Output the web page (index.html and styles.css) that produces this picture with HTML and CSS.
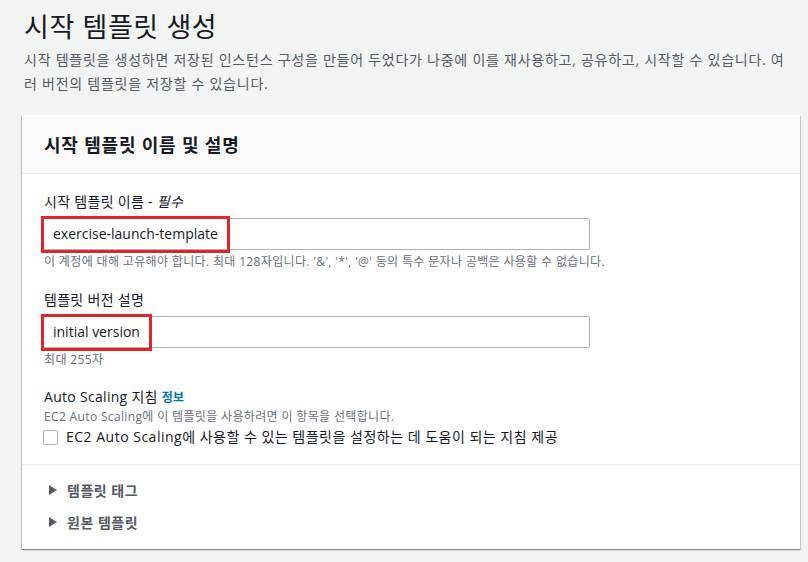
FILE: index.html
```html
<!DOCTYPE html>
<html lang="ko">
<head>
<meta charset="utf-8">
<link rel="stylesheet" href="styles.css">
</head>
<body>
<div class="page">
  <h1 class="title">시작 템플릿 생성</h1>
  <p class="desc">시작 템플릿을 생성하면 저장된 인스턴스 구성을 만들어 두었다가 나중에 이를 재사용하고, 공유하고, 시작할 수 있습니다. 여러 버전의 템플릿을 저장할 수 있습니다.</p>
  <section class="card">
    <header class="card-head">시작 템플릿 이름 및 설명</header>
    <div class="card-body">
      <div class="field">
        <label class="label">시작 템플릿 이름 - <i>필수</i></label>
        <div class="input"><span class="mark">exercise-launch-template</span></div>
        <div class="hint">이 계정에 대해 고유해야 합니다. 최대 128자입니다. '&amp;', '*', '@' 등의 특수 문자나 공백은 사용할 수 없습니다.</div>
      </div>
      <div class="field">
        <label class="label">템플릿 버전 설명</label>
        <div class="input"><span class="mark">initial version</span></div>
        <div class="hint">최대 255자</div>
      </div>
      <div class="field as">
        <div class="label">Auto Scaling 지침 <a class="info">정보</a></div>
        <div class="hint small">EC2 Auto Scaling에 이 템플릿을 사용하려면 이 항목을 선택합니다.</div>
        <div class="check"><span class="box"></span><span>EC2 Auto Scaling에 사용할 수 있는 템플릿을 설정하는 데 도움이 되는 지침 제공</span></div>
      </div>
    </div>
    <div class="expanders">
      <div class="exp"><span class="caret"></span>템플릿 태그</div>
      <div class="exp"><span class="caret"></span>원본 템플릿</div>
    </div>
  </section>
</div>
</body>
</html>
```
FILE: styles.css
```css
* { box-sizing: border-box; }
html, body { margin: 0; padding: 0; }
body {
  background: #f2f3f3;
  font-family: "Open Sans", "Noto Sans CJK KR", sans-serif;
  color: #16191f;
  width: 808px;
  height: 562px;
  overflow: hidden;
}
.page { padding: 9px 8px 0 22px; }
.title {
  margin: 0 0 0 2px;
  font-weight: 400;
  font-size: 27px;
  line-height: 36px;
  letter-spacing: 0.6px;
  color: #16191f;
}
.desc {
  margin: 3px 10px 0 2px;
  font-size: 14px;
  line-height: 24px;
  letter-spacing: 0.75px;
  color: #545b64;
}
.card {
  margin-top: 19px;
  background: #fff;
  box-shadow: 0 1px 1px 0 rgba(0,28,36,0.3), 1px 1px 1px 0 rgba(0,28,36,0.15), -1px 1px 1px 0 rgba(0,28,36,0.15);
  height: 434px;
}
.card-head {
  background: #fafafa;
  border-bottom: 1px solid #eaeded;
  height: 59px;
  padding: 0 22px;
  display: flex;
  align-items: center;
  font-size: 18px;
  font-weight: 700;
  letter-spacing: 0.8px;
}
.card-body { padding: 17px 20px 0 20px; }
.field { margin-bottom: 18px; }
.label { font-size: 14px; line-height: 22px; margin-left: 2px; display: block; letter-spacing: 0.3px; }
.label i { font-style: italic; }
.input {
  margin-top: 5px;
  width: 548px;
  height: 32px;
  border: 1px solid #aab7b8;
  border-radius: 2px;
  display: flex;
  align-items: center;
}
.mark {
  font-size: 14px;
  padding: 3px 9px 4px 9px;
  border: 3px solid #e4222b;
  margin-left: -2px;
  line-height: 24px;
}
.hint { font-size: 12px; color: #687078; line-height: 18px; margin-top: 3px; margin-left: 2px; letter-spacing: 0.35px; }
.field.as { margin-top: 18px; margin-bottom: 0; }
.field.as .label { line-height: 20px; }
.hint.small { margin-top: 0; }
.info { color: #0073bb; font-size: 12px; font-weight: 700; }
.check {
  display: flex;
  align-items: center;
  font-size: 14px;
  margin-top: 1px;
  margin-left: 1px;
  line-height: 20px;
  letter-spacing: 0.5px;
}
.box {
  width: 15px;
  height: 15px;
  border: 1px solid #aab7b8;
  border-radius: 2px;
  margin-right: 8px;
  background: #fff;
}
.expanders {
  border-top: 1px solid #eaeded;
  margin-top: 17px;
  padding: 14px 20px 0 27px;
}
.exp {
  display: flex;
  align-items: center;
  font-size: 14px;
  font-weight: 700;
  color: #545b64;
  height: 22px;
  margin-bottom: 10px;
  letter-spacing: 0.5px;
}
.caret {
  width: 0; height: 0;
  border-top: 5px solid transparent;
  border-bottom: 5px solid transparent;
  border-left: 8px solid #545b64;
  margin-right: 10px;
}
```
